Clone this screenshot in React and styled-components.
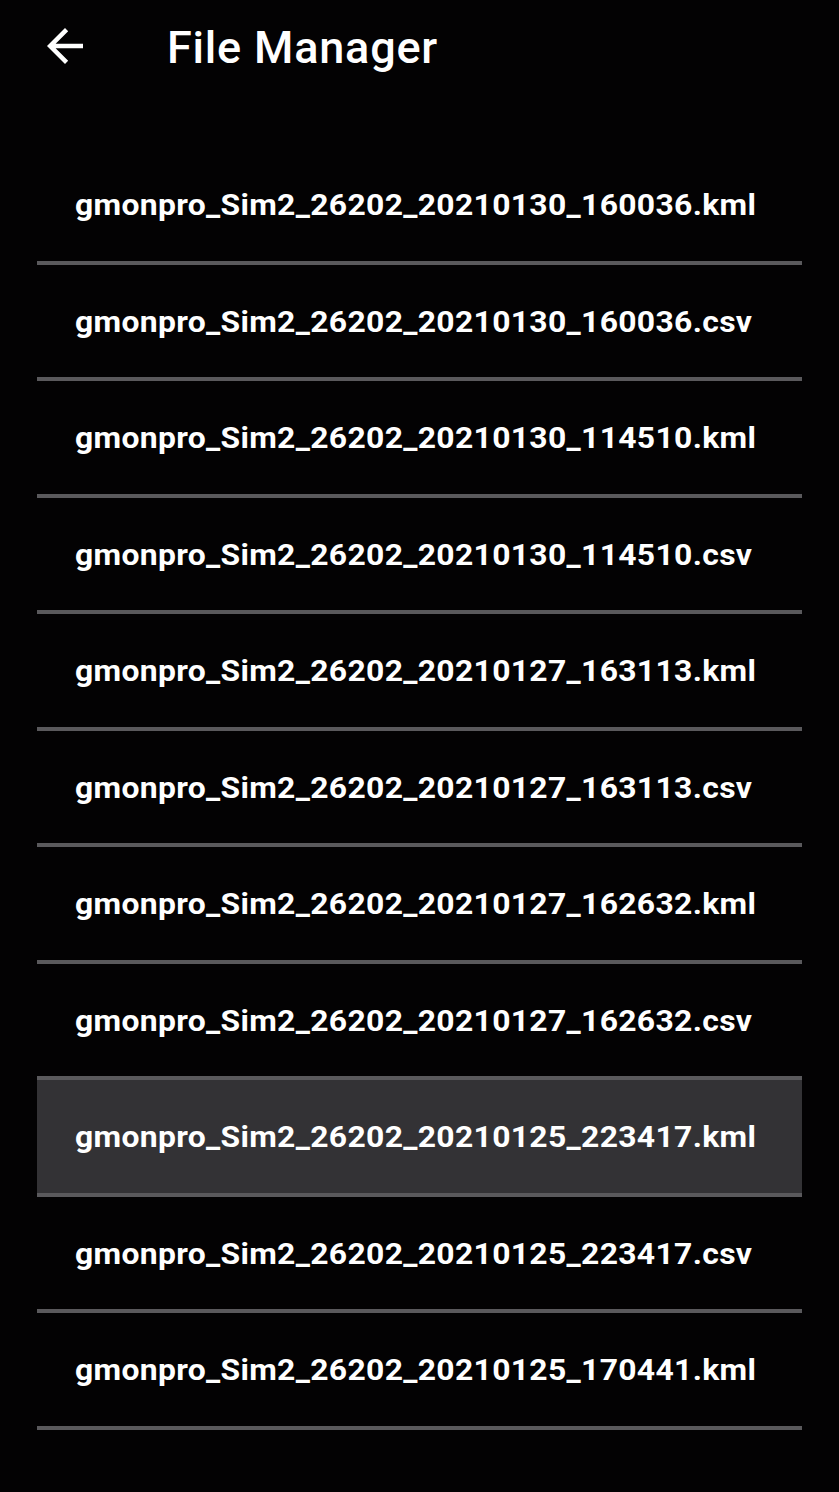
import React from 'react'
import styled, { createGlobalStyle } from 'styled-components'

const GlobalStyle = createGlobalStyle`
  html, body {
    margin: 0;
    padding: 0;
    background: #030203;
  }
  body {
    font-family: Roboto, "Noto Sans", sans-serif;
    color: #ffffff;
  }
`

const Screen = styled.div`
  width: 839px;
  min-height: 1492px;
  background: #030203;
  display: flex;
  flex-direction: column;
`

const Header = styled.div`
  height: 92px;
  display: flex;
  align-items: center;
`

const BackButton = styled.button`
  width: 56px;
  height: 56px;
  margin-left: 37px;
  margin-right: 74px;
  padding: 0;
  border: 0;
  background: transparent;
  display: flex;
  align-items: center;
  justify-content: center;
  cursor: pointer;
`

const Title = styled.div`
  font-size: 45px;
  font-weight: 500;
  color: #ffffff;
  letter-spacing: 0.8px;
  margin-top: 2px;
`

const List = styled.div`
  margin: 56px 37px 0 37px;
  display: flex;
  flex-direction: column;
`

const Row = styled.div`
  height: ${p => (p.$active ? '120.5px' : '116.5px')};
  display: flex;
  align-items: center;
  padding-left: 38px;
  box-sizing: border-box;
  border-bottom: 4px solid #5a595c;
  background: ${p => (p.$active ? '#333235' : 'transparent')};
  border-top: ${p => (p.$active ? '4px solid #5a595c' : '0')};
  margin-top: ${p => (p.$active ? '-4px' : '0')};
`

const Name = styled.span`
  font-size: 29.5px;
  font-weight: 700;
  letter-spacing: 0.3px;
  color: #ffffff;
  white-space: nowrap;
  margin-top: 2px;
  transform: scaleX(1.08);
  transform-origin: left center;
`

const files = [
  'gmonpro_Sim2_26202_20210130_160036.kml',
  'gmonpro_Sim2_26202_20210130_160036.csv',
  'gmonpro_Sim2_26202_20210130_114510.kml',
  'gmonpro_Sim2_26202_20210130_114510.csv',
  'gmonpro_Sim2_26202_20210127_163113.kml',
  'gmonpro_Sim2_26202_20210127_163113.csv',
  'gmonpro_Sim2_26202_20210127_162632.kml',
  'gmonpro_Sim2_26202_20210127_162632.csv',
  'gmonpro_Sim2_26202_20210125_223417.kml',
  'gmonpro_Sim2_26202_20210125_223417.csv',
  'gmonpro_Sim2_26202_20210125_170441.kml',
]

const BackArrow = () => (
  <svg width="54" height="54" viewBox="0 0 24 24" fill="#ffffff">
    <path d="M20 11H7.83l5.59-5.59L12 4l-8 8 8 8 1.41-1.41L7.83 13H20v-2z" />
  </svg>
)

const App = () => {
  return (
    <Screen>
      <GlobalStyle />
      <Header>
        <BackButton>
          <BackArrow />
        </BackButton>
        <Title>File Manager</Title>
      </Header>
      <List>
        {files.map((f, i) => (
          <Row key={f} $active={i === 8}>
            <Name>{f}</Name>
          </Row>
        ))}
      </List>
    </Screen>
  )
}

export default App
